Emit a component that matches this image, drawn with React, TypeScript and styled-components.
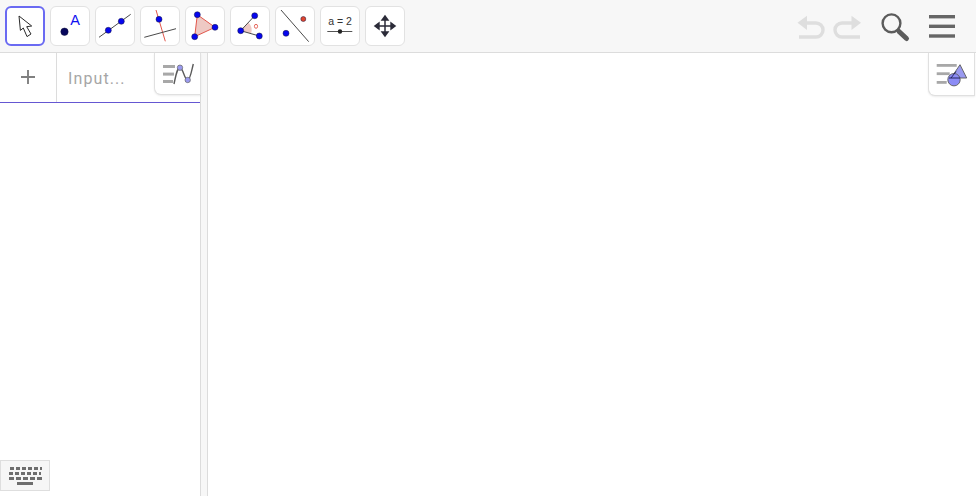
import React from "react"
import styled, { createGlobalStyle } from "styled-components"

const GlobalStyle = createGlobalStyle`
  html, body {
    margin: 0;
    padding: 0;
    background: #fff;
    overflow: hidden;
    font-family: Roboto, "Liberation Sans", sans-serif;
  }
`

const Page = styled.div`
  position: relative;
  width: 976px;
  height: 496px;
  display: flex;
  flex-direction: column;
`

const Toolbar = styled.div`
  height: 52px;
  flex: none;
  display: flex;
  align-items: flex-start;
  background: #f7f7f7;
  border-bottom: 1px solid #dcdcdc;
  padding-left: 5px;
`

const Tools = styled.div`
  display: flex;
  gap: 5px;
  padding-top: 6px;
`

const ToolButton = styled.div<{ $active?: boolean }>`
  width: 40px;
  height: 40px;
  box-sizing: border-box;
  background: #fff;
  border-radius: 6px;
  border: ${({ $active }) => ($active ? "2px solid #6a6af2" : "1px solid #e2e2e2")};
  display: flex;
  align-items: center;
  justify-content: center;
  svg {
    display: block;
    flex: none;
    width: 40px;
    height: 40px;
  }
`

const Actions = styled.div`
  margin-left: auto;
  display: flex;
  align-items: flex-start;
  svg {
    display: block;
    height: 52px;
  }
`

const Body = styled.div`
  flex: 1;
  display: flex;
  min-height: 0;
`

const AlgebraPanel = styled.div`
  width: 200px;
  flex: none;
`

const InputRow = styled.div`
  height: 50px;
  box-sizing: border-box;
  display: flex;
  border-bottom: 1px solid #6557d2;
`

const PlusCell = styled.div`
  width: 57px;
  flex: none;
  box-sizing: border-box;
  border-right: 1px solid #dcdcdc;
  padding: 0 1px 2px 0;
  display: flex;
  align-items: center;
  justify-content: center;
`

const InputHint = styled.div`
  padding: 1px 0 0 11px;
  line-height: 49px;
  font-size: 16px;
  letter-spacing: 1.1px;
  color: #a6a6a6;
`

const Splitter = styled.div`
  width: 8px;
  flex: none;
  box-sizing: border-box;
  background: #f7f7f7;
  border-left: 1px solid #dcdcdc;
  border-right: 1px solid #dcdcdc;
`

const Graphics = styled.div`
  flex: 1;
`

const StyleTab = styled.div<{ $left: number; $height: number }>`
  position: absolute;
  top: 53px;
  left: ${({ $left }) => $left}px;
  width: 47px;
  height: ${({ $height }) => $height}px;
  box-sizing: border-box;
  background: #fff;
  border: 1px solid #e0e0e0;
  border-top: none;
  border-bottom-left-radius: 7px;
  box-shadow: 0 1px 2px rgba(0, 0, 0, 0.08);
  svg {
    display: block;
  }
`

const KeyboardButton = styled.div`
  position: absolute;
  left: 0;
  top: 460px;
  width: 50px;
  height: 31px;
  box-sizing: border-box;
  background: #f6f6f6;
  border: 1px solid #dedede;
  display: flex;
  align-items: center;
  justify-content: center;
`

const BLUE = "#0606ee"
const RED = "#e2574c"
const PINK = "#eec9c4"
const INK = "#4a4a4a"

const Dot = ({ x, y, r = 3, fill = BLUE }: { x: number; y: number; r?: number; fill?: string }) => (
  <circle cx={x} cy={y} r={r} fill={fill} stroke="#14143c" strokeWidth="0.5" />
)

const Canvas = ({ children }: { children: React.ReactNode }) => (
  <svg viewBox="0 0 40 40">{children}</svg>
)

const tools = [
  <Canvas key="move">
    <path
      d="M14 10 L15.4 24.4 L18.3 22 L22 30.6 L26 28 L21.7 20.7 L26.7 20 Z"
      fill="#fff"
      stroke="#2a2a2a"
      strokeWidth="1"
      strokeLinejoin="round"
    />
  </Canvas>,
  <Canvas key="point">
    <Dot x={14.5} y={25.7} r={3.7} fill="#06065c" />
    <text x={20.2} y={19.3} fontFamily="Liberation Sans, sans-serif" fontSize="14.5" fill="#1010f0">
      A
    </text>
  </Canvas>,
  <Canvas key="line">
    <line x1="4" y1="31.3" x2="35.7" y2="8.3" stroke={INK} strokeWidth="1" />
    <Dot x={13.3} y={24.3} />
    <Dot x={26.3} y={15.3} />
  </Canvas>,
  <Canvas key="perpendicular">
    <line x1="16" y1="4" x2="25.3" y2="35.3" stroke={RED} strokeWidth="1" />
    <line x1="4.3" y1="31.3" x2="36" y2="22.7" stroke={INK} strokeWidth="1" />
    <Dot x={19} y={13.3} />
  </Canvas>,
  <Canvas key="polygon">
    <polygon points="12.3,8.7 30,21.3 9.7,30.7" fill={PINK} stroke={RED} strokeWidth="1" />
    <Dot x={12.3} y={8.7} />
    <Dot x={30} y={21.3} />
    <Dot x={9.7} y={30.7} />
  </Canvas>,
  <Canvas key="angle">
    <path d="M10.7 24.7 L18.4 16.4 A11 11 0 0 1 21 27.6 Z" fill={PINK} />
    <line x1="10.7" y1="24.7" x2="24.7" y2="9.7" stroke={INK} strokeWidth="1" />
    <line x1="10.7" y1="24.7" x2="29.3" y2="30" stroke={INK} strokeWidth="1" />
    <ellipse cx="26" cy="20.3" rx="1.6" ry="2" fill="none" stroke={RED} strokeWidth="0.9" />
    <Dot x={10.7} y={24.7} />
    <Dot x={24.7} y={9.7} />
    <Dot x={29.3} y={30} />
  </Canvas>,
  <Canvas key="reflect">
    <line x1="6" y1="4" x2="33.7" y2="35.7" stroke={INK} strokeWidth="1" />
    <Dot x={28.3} y={13} r={2.5} fill="#e0452f" />
    <Dot x={11} y={27.3} />
  </Canvas>,
  <Canvas key="slider">
    <text
      x="20"
      y="19"
      textAnchor="middle"
      fontFamily="Liberation Sans, sans-serif"
      fontSize="10.5"
      fill="#333"
    >
      a = 2
    </text>
    <line x1="7.3" y1="25.5" x2="32.3" y2="25.5" stroke="#555" strokeWidth="1" />
    <circle cx="20" cy="25.5" r="2.2" fill="#222" />
  </Canvas>,
  <Canvas key="pan">
    <g fill="#2b2b38">
      <rect x="19.25" y="12" width="1.5" height="16" />
      <rect x="12" y="19.25" width="16" height="1.5" />
      <polygon points="20,8.7 24.4,14.7 15.6,14.7" />
      <polygon points="20,31.3 24.4,25.3 15.6,25.3" />
      <polygon points="8.7,20 14.7,15.6 14.7,24.4" />
      <polygon points="31.3,20 25.3,15.6 25.3,24.4" />
    </g>
  </Canvas>
]

const TopActions = () => (
  <Actions>
    <svg width="186" viewBox="790 0 186 52">
      <g fill="none" stroke="#dedede" strokeWidth="3.4">
        <path d="M805 23 H816 a7 7 0 0 1 0 14 H799" />
        <path d="M853 23 H842 a7 7 0 0 0 0 14 H860" />
      </g>
      <polygon points="797.5,22.7 807,15.7 807,30" fill="#dedede" />
      <polygon points="861,22.7 851.5,15.7 851.5,30" fill="#dedede" />
      <circle cx="891.5" cy="23.3" r="8.9" fill="none" stroke="#5c5c5c" strokeWidth="2.4" />
      <line x1="899" y1="31.5" x2="906.5" y2="38.5" stroke="#5c5c5c" strokeWidth="5" strokeLinecap="round" />
      <g fill="#666">
        <rect x="929" y="15" width="26" height="3.4" />
        <rect x="929" y="24.6" width="26" height="3.4" />
        <rect x="929" y="34.3" width="26" height="3.4" />
      </g>
    </svg>
  </Actions>
)

const AlgebraStyleIcon = () => (
  <svg width="46" height="42" viewBox="0 0 46 42">
    <g fill="#a8a8a8">
      <rect x="8" y="12" width="12" height="3" />
      <rect x="8" y="19.6" width="11" height="3" />
      <rect x="8" y="27" width="10" height="3" />
    </g>
    <path
      d="M19 31 C21 22 22 14.7 25 14.7 C28 14.7 29.5 27 32.7 27 C35.2 27 36.5 18 38.3 11"
      fill="none"
      stroke="#5a5a5a"
      strokeWidth="1.4"
    />
    <circle cx="25" cy="14.7" r="2.7" fill="#9a9af0" stroke="#666" strokeWidth="0.7" />
    <circle cx="32.7" cy="27" r="2.7" fill="#9a9af0" stroke="#666" strokeWidth="0.7" />
  </svg>
)

const GraphicsStyleIcon = () => (
  <svg width="46" height="42" viewBox="0 0 46 42">
    <g fill="#a8a8a8">
      <rect x="7.7" y="11" width="20" height="2.8" />
      <rect x="7.7" y="19.3" width="13" height="2.8" />
      <rect x="7.7" y="28" width="10" height="2.8" />
    </g>
    <polygon points="31,11.7 37.7,25 22,25" fill="#9a9af0" stroke="#5a5a5a" strokeWidth="0.9" />
    <circle cx="25" cy="26.7" r="6.2" fill="#8c8cf5" stroke="#5a5a5a" strokeWidth="0.9" />
    <path d="M20 25 H31 M27 18.5 L22 25" stroke="#1a1a50" strokeWidth="0.9" fill="none" />
  </svg>
)

const KeyboardIcon = () => (
  <svg width="33" height="18" viewBox="0 0 33 18">
    <g fill="#6e6e6e">
      {[0, 1, 2, 3, 4, 5].map((i) => (
        <rect key={`a${i}`} x={i * 6 + 1} y="0" width="4" height="3" />
      ))}
      {[0, 1, 2, 3, 4, 5].map((i) => (
        <rect key={`b${i}`} x={i * 6} y="5" width={i === 5 ? 2 : 4} height="3" />
      ))}
      {[0, 1, 2, 3, 4].map((i) => (
        <rect key={`c${i}`} x={i * 7} y="10" width={5} height="3" />
      ))}
      <rect x="8" y="15" width="16" height="3" />
    </g>
  </svg>
)

export default function App() {
  return (
    <Page>
      <GlobalStyle />
      <Toolbar>
        <Tools>
          {tools.map((icon, i) => (
            <ToolButton key={i} $active={i === 0}>
              {icon}
            </ToolButton>
          ))}
        </Tools>
        <TopActions />
      </Toolbar>
      <Body>
        <AlgebraPanel>
          <InputRow>
            <PlusCell>
              <svg width="16" height="16" viewBox="0 0 16 16">
                <path d="M8 1 V15 M1 8 H15" stroke="#808080" strokeWidth="1.9" fill="none" />
              </svg>
            </PlusCell>
            <InputHint>Input...</InputHint>
          </InputRow>
        </AlgebraPanel>
        <Splitter />
        <Graphics />
      </Body>
      <StyleTab $left={154} $height={42}>
        <AlgebraStyleIcon />
      </StyleTab>
      <StyleTab $left={928} $height={43}>
        <GraphicsStyleIcon />
      </StyleTab>
      <KeyboardButton>
        <KeyboardIcon />
      </KeyboardButton>
    </Page>
  )
}
